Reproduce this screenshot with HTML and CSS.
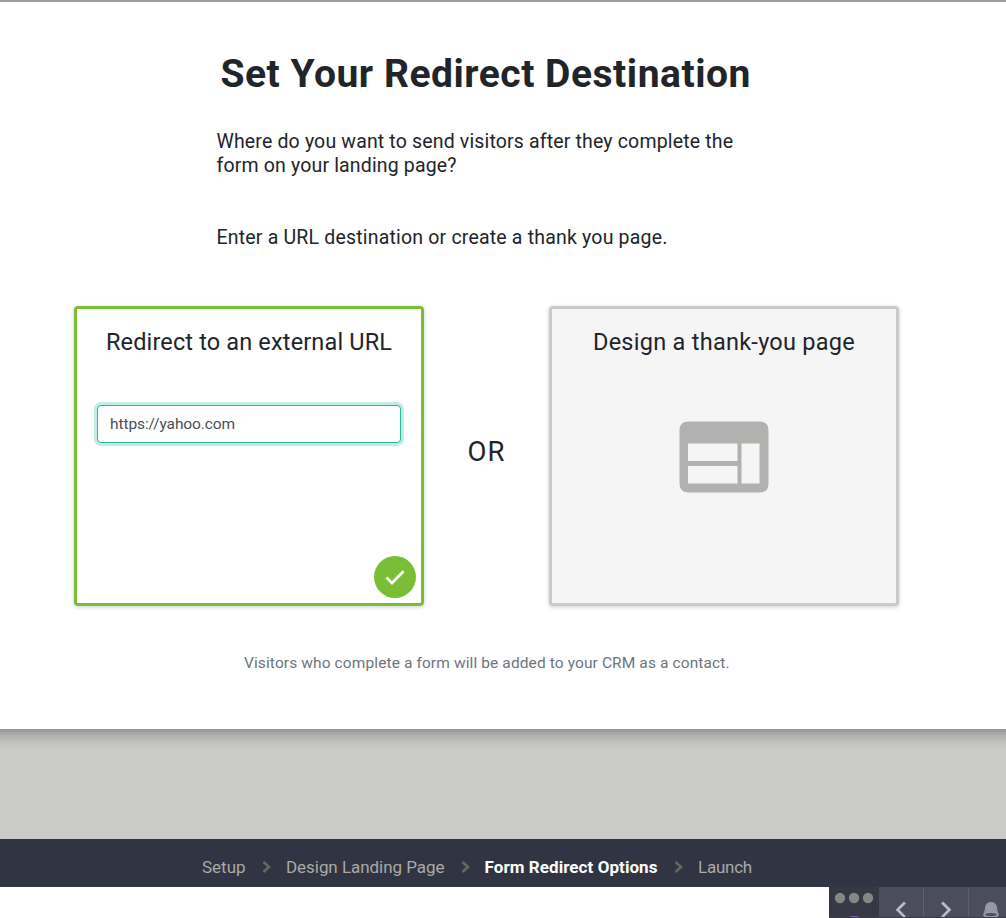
FILE: index.html
```html
<!DOCTYPE html>
<html lang="en">
<head>
<meta charset="utf-8">
<title>Set Your Redirect Destination</title>
<link rel="stylesheet" href="styles.css">
</head>
<body>
<main class="panel">
  <h1 class="title">Set Your Redirect Destination</h1>
  <div class="intro">
    <p class="question">Where do you want to send visitors after they complete the<br>form on your landing page?</p>
    <p class="hint">Enter a URL destination or create a thank you page.</p>
  </div>
  <div class="choices">
    <section class="card card-selected">
      <h2 class="card-title title-url">Redirect to an external URL</h2>
      <input class="url" type="text" value="https://yahoo.com">
      <svg class="check" viewBox="0 0 42 42"><circle cx="21" cy="21" r="21"/><path d="M12.500 21.500l5.500 5.500L29.500 15.200"/></svg>
    </section>
    <div class="or">OR</div>
    <section class="card card-design">
      <h2 class="card-title title-design">Design a thank-you page</h2>
      <svg class="web" viewBox="0 0 90 72"><path fill-rule="evenodd" d="M9.500 .5H80.500Q89.500 .5 89.500 9.500V62.500Q89.500 71.500 80.500 71.500H9.500Q.5 71.500 .5 62.500V9.500Q.5 .5 9.500 .5ZM9 22.500V40H58.500V22.500ZM9 45V62.500H58.500V45ZM62.500 22.500V62.500H80.500V22.500Z"/></svg>
    </section>
  </div>
  <p class="note">Visitors who complete a form will be added to your CRM as a contact.</p>
</main>
<nav class="steps">
  <span class="step s1">Setup</span>
  <svg class="sep" viewBox="0 0 9 12"><path d="M1.500 1L7 6l-5.500 5"/></svg>
  <span class="step s2">Design Landing Page</span>
  <svg class="sep" viewBox="0 0 9 12"><path d="M1.500 1L7 6l-5.500 5"/></svg>
  <span class="step s3">Form Redirect Options</span>
  <svg class="sep" viewBox="0 0 9 12"><path d="M1.500 1L7 6l-5.500 5"/></svg>
  <span class="step s4">Launch</span>
</nav>
<footer class="tray">
  <div class="tools">
    <svg class="more" viewBox="0 0 50 31"><g fill="#868686"><circle cx="11" cy="11" r="5.200"/><circle cx="25" cy="11" r="5.200"/><circle cx="39" cy="11" r="5.200"/></g><circle cx="25" cy="44" r="15" fill="#8a56e0"/></svg>
    <svg class="tool" viewBox="0 0 45 31"><path class="arrow" d="M26.500 15.500l-7.500 7.500 7.500 7.500"/></svg>
    <svg class="tool" viewBox="0 0 45 31"><path class="arrow" d="M18.500 15.500l7.500 7.500-7.500 7.500"/></svg>
    <svg class="bell" viewBox="0 0 37 31"><path fill="#9597aa" d="M22 15C18 15 16 18 16 21Q16 24 14.500 25.500H29.500Q28 24 28 21C28 18 26 15 22 15Z"/><ellipse cx="22" cy="27.500" rx="6.800" ry="2.600" fill="none" stroke="#9597aa" stroke-width="2"/></svg>
  </div>
</footer>
</body>
</html>
```
FILE: styles.css
```css
* { box-sizing: border-box; }
body {
  margin: 0;
  height: 918px;
  overflow: hidden;
  display: flex;
  flex-direction: column;
  background: #cbcbc9;
  color: #212529;
  font-family: Roboto, "Liberation Sans", sans-serif;
}
h1, h2, p { margin: 0; font-weight: 400; }
.panel {
  height: 729px;
  flex: none;
  border-top: 2px solid #9d9d9d;
  background: #fff;
  box-shadow: 0 2px 18px rgba(0, 0, 0, .45);
  margin: 0 -20px;
  padding: 0 20px;
}
.title {
  padding: 48px 0 0 220.500px;
  font-size: 39px;
  line-height: 48px;
  font-weight: 700;
  letter-spacing: .52px;
  white-space: nowrap;
}
.intro {
  padding: 32px 0 0 216.500px;
  font-size: 19.500px;
  line-height: 24px;
  letter-spacing: .16px;
  white-space: nowrap;
}
.hint { padding-top: 48px; letter-spacing: .19px; }
.choices { display: flex; margin: 56px 0 0 74px; }
.card {
  position: relative;
  width: 350px;
  height: 300px;
  padding: 17px 18px;
  border: 3px solid #7abe36;
  border-radius: 4px;
  box-shadow: 0 1px 4px rgba(0, 0, 0, .2);
  display: flex;
  flex-direction: column;
}
.card-design { border-color: #cacac9; background: #f5f5f5; align-items: center; }
.card-title { font-size: 23.500px; line-height: 32px; text-align: center; white-space: nowrap; }
.title-url { letter-spacing: .15px; }
.title-design { letter-spacing: .27px; }
.url {
  margin: 47px 0 0 2px;
  width: 304px;
  height: 38px;
  padding: 0 12px;
  border: 1px solid #28b99a;
  border-radius: 4px;
  outline: none;
  box-shadow: 0 0 0 3px #c1ede4;
  color: #495057;
  font: 15.500px Roboto, "Liberation Sans", sans-serif;
  letter-spacing: -.1px;
}
.check { position: absolute; right: 5px; bottom: 5px; width: 42px; height: 42px; fill: #7abe36; }
.check path { fill: none; stroke: #fff; stroke-width: 2.800; }
.or { width: 125px; padding-top: 130px; font-size: 27.500px; line-height: 32px; letter-spacing: 1px; text-align: center; }
.web { width: 90px; height: 72px; margin-top: 63px; fill: #b1b1af; }
.note { margin: 47px 0 0 244px; font-size: 15.500px; line-height: 20px; letter-spacing: .11px; color: #6c757d; white-space: nowrap; }
.steps {
  flex: none;
  height: 48px;
  margin-top: 110px;
  padding: 9px 0 0 202px;
  display: flex;
  background: #313442;
  color: #aaaaa8;
  font-size: 17px;
  line-height: 39px;
  white-space: nowrap;
}
.s1 { width: 60px; }
.s2 { width: 174.500px; letter-spacing: -.05px; }
.s3 { width: 189.500px; color: #fff; font-weight: 700; letter-spacing: .07px; }
.s4 { letter-spacing: -.25px; }
.sep { width: 9px; height: 12px; margin: 13px 15px 0 0; fill: none; stroke: #666762; stroke-width: 2.600; }
.tray { height: 31px; flex: none; display: flex; justify-content: flex-end; background: #fff; }
.tools { display: flex; width: 177px; background: #4b4d5c; border-bottom: 1px solid #3c3c47; overflow: hidden; }
.more { width: 50px; height: 31px; flex: none; background: #353945; }
.tool { width: 45px; height: 31px; flex: none; border-right: 1px solid #5c5f70; }
.bell { width: 37px; height: 31px; flex: none; }
.arrow { fill: none; stroke: #b7bacb; stroke-width: 2.800; }
```
